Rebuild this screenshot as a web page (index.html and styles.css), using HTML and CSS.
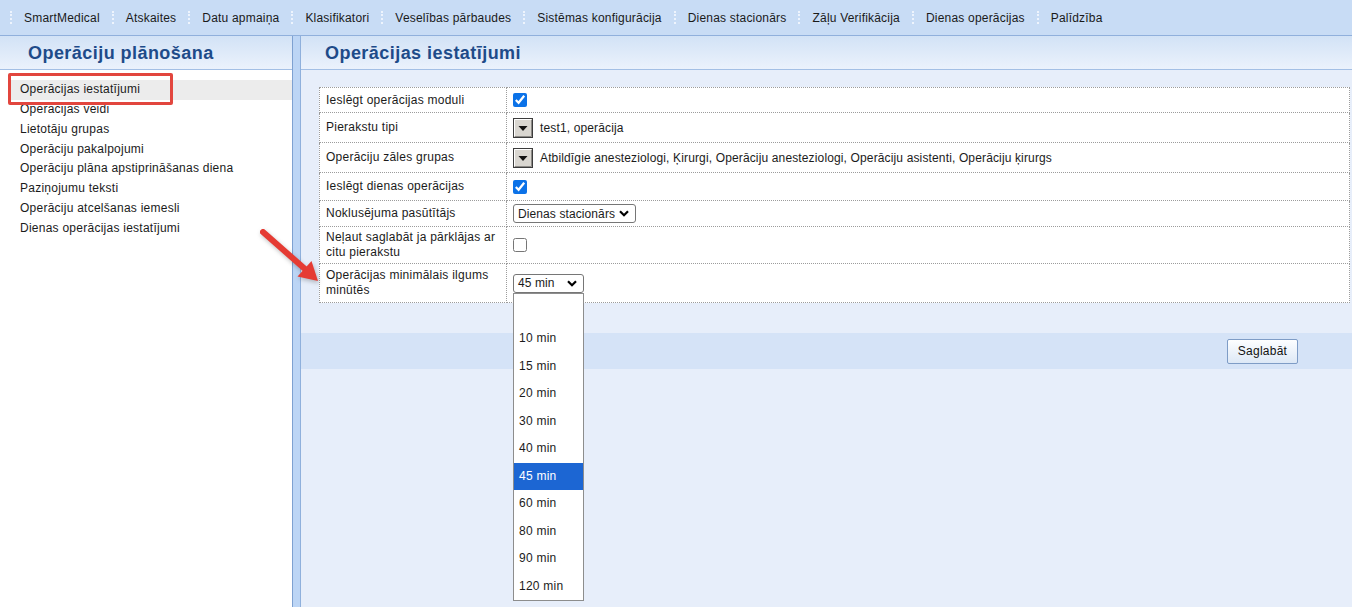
FILE: index.html
```html
<!DOCTYPE html>
<html lang="lv">
<head>
  <meta charset="UTF-8" />
  <title>Operāciju plānošana - SmartMedical</title>
  <link rel="stylesheet" href="styles.css">
</head>
<body>
  <nav class="menubar">
    <span class="sep"></span><a href="#">SmartMedical</a>
    <span class="sep"></span><a href="#">Atskaites</a>
    <span class="sep"></span><a href="#">Datu apmaiņa</a>
    <span class="sep"></span><a href="#">Klasifikatori</a>
    <span class="sep"></span><a href="#">Veselības pārbaudes</a>
    <span class="sep"></span><a href="#">Sistēmas konfigurācija</a>
    <span class="sep"></span><a href="#">Dienas stacionārs</a>
    <span class="sep"></span><a href="#">Zāļu Verifikācija</a>
    <span class="sep"></span><a href="#">Dienas operācijas</a>
    <span class="sep"></span><a href="#">Palīdzība</a>
  </nav>

  <div class="layout">
    <aside class="sidebar">
      <h1 class="panel-title">Operāciju plānošana</h1>
      <ul class="nav">
        <li class="active">Operācijas iestatījumi</li>
        <li>Operacijas veidi</li>
        <li>Lietotāju grupas</li>
        <li>Operāciju pakalpojumi</li>
        <li>Operāciju plāna apstiprināšanas diena</li>
        <li>Paziņojumu teksti</li>
        <li>Operāciju atcelšanas iemesli</li>
        <li>Dienas operācijas iestatījumi</li>
      </ul>
      <div class="mark-box"></div>
    </aside>

    <div class="splitter"></div>

    <main class="content">
      <h2 class="panel-title">Operācijas iestatījumi</h2>
      <div class="form-wrap">
        <table class="settings">
          <tr class="r25">
            <td class="label">Ieslēgt operācijas moduli</td>
            <td><input type="checkbox" checked></td>
          </tr>
          <tr class="r30">
            <td class="label">Pierakstu tipi</td>
            <td>
              <div class="multi">
                <svg class="pick" width="20" height="20" viewBox="0 0 20 20">
                  <rect x="0.5" y="0.5" width="19" height="19" fill="#d9d6d0" stroke="#3c3c3c"/>
                  <path d="M1.5 18V1.5H18" fill="none" stroke="#ffffff"/>
                  <path d="M2 18.5H18.5V2" fill="none" stroke="#8c8a86"/>
                  <path d="M5.5 8h9l-4.5 5z" fill="#111"/>
                </svg>
                <span>test1, operācija</span>
              </div>
            </td>
          </tr>
          <tr class="r30">
            <td class="label">Operāciju zāles grupas</td>
            <td>
              <div class="multi">
                <svg class="pick" width="20" height="20" viewBox="0 0 20 20">
                  <rect x="0.5" y="0.5" width="19" height="19" fill="#d9d6d0" stroke="#3c3c3c"/>
                  <path d="M1.5 18V1.5H18" fill="none" stroke="#ffffff"/>
                  <path d="M2 18.5H18.5V2" fill="none" stroke="#8c8a86"/>
                  <path d="M5.5 8h9l-4.5 5z" fill="#111"/>
                </svg>
                <span>Atbildīgie anesteziologi, Ķirurgi, Operāciju anesteziologi, Operāciju asistenti, Operāciju ķirurgs</span>
              </div>
            </td>
          </tr>
          <tr class="r28">
            <td class="label">Ieslēgt dienas operācijas</td>
            <td><input type="checkbox" checked></td>
          </tr>
          <tr class="r26">
            <td class="label">Noklusējuma pasūtītājs</td>
            <td>
              <div class="select select-wide">
                <span>Dienas stacionārs</span>
                <svg width="10" height="7" viewBox="0 0 10 7"><path d="M1 1.2l4 4 4-4" fill="none" stroke="#000" stroke-width="2.2"/></svg>
              </div>
            </td>
          </tr>
          <tr class="r37">
            <td class="label">Neļaut saglabāt ja pārklājas ar<br>citu pierakstu</td>
            <td><input type="checkbox"></td>
          </tr>
          <tr class="r39">
            <td class="label">Operācijas minimālais ilgums<br>minūtēs</td>
            <td>
              <div class="select-wrap">
                <div class="select select-short">
                  <span>45 min</span>
                  <svg width="10" height="7" viewBox="0 0 10 7"><path d="M1 1.2l4 4 4-4" fill="none" stroke="#000" stroke-width="2.2"/></svg>
                </div>
                <ul class="dropdown">
                  <li></li>
                  <li>10 min</li>
                  <li>15 min</li>
                  <li>20 min</li>
                  <li>30 min</li>
                  <li>40 min</li>
                  <li class="selected">45 min</li>
                  <li>60 min</li>
                  <li>80 min</li>
                  <li>90 min</li>
                  <li>120 min</li>
                </ul>
              </div>
            </td>
          </tr>
        </table>
      </div>
      <div class="actions">
        <button type="button">Saglabāt</button>
      </div>
    </main>
  </div>

  <!-- annotation arrow pointing at the duration row -->
  <svg class="pointer" width="72" height="66" viewBox="0 0 72 66">
    <path d="M8 7L50 44" stroke="#e53b33" stroke-width="6" stroke-linecap="round"/>
    <path d="M63 56L42.5 51.5L56.5 36z" fill="#e53b33"/>
  </svg>
</body>
</html>
```

FILE: styles.css
```css
body {
  margin: 0;
  font-family: "Liberation Sans", Arial, sans-serif;
  font-size: 12px;
  letter-spacing: 0.25px;
  color: #1b1b1b;
  background: #fff;
  overflow: hidden;
}
/* top menu */
.menubar {
  display: flex;
  align-items: center;
  height: 35px;
  padding-left: 10px;
  background: #c8dcf5;
  border-bottom: 1px solid #90b0dc;
  letter-spacing: 0.2px;
}
.menubar .sep {
  width: 0;
  height: 13px;
  border-left: 2px dotted #eef4fd;
}
.menubar a {
  padding: 0 12px;
  color: #1a1a1a;
  text-decoration: none;
}
/* two panels */
.layout {
  display: flex;
  height: 571px;
}
.sidebar {
  width: 292px;
  position: relative;
  background: #fff;
}
.splitter {
  width: 7px;
  background: #bcd5f5;
  border-left: 1px solid #7ea1d1;
  border-right: 1px solid #8fb0dc;
}
.content {
  flex: 1;
  display: flex;
  flex-direction: column;
  background: #e7eefa;
}
.panel-title {
  margin: 0;
  height: 33px;
  line-height: 34px;
  font-size: 18px;
  letter-spacing: 0.45px;
  font-weight: bold;
  color: #1e4b89;
  background: linear-gradient(#d2e2f6, #ebf2fc);
  border-bottom: 1px solid #a3bfe5;
}
.sidebar .panel-title { padding-left: 28px; }
.content .panel-title { padding-left: 24px; }

.nav {
  list-style: none;
  margin: 10px 0 0 8px;
  padding: 0;
}
.nav li {
  line-height: 19.85px;
  padding-left: 12px;
  color: #1b1b1b;
}
.nav li.active { background: #ececec; }
.mark-box {
  position: absolute;
  left: 8px; top: 37px;
  width: 165px; height: 32px;
  box-sizing: border-box;
  border: 3px solid #e2463e;
  border-radius: 2px;
}
/* settings form */
.form-wrap {
  padding: 17px 2px 0 18px;
}
.settings {
  width: 100%;
  border-collapse: collapse;
  background: #fff;
}
.settings td {
  border: 1px dotted #9c9c9c;
  padding: 0 6px;
  vertical-align: middle;
}
.settings td.label {
  width: 174px;
  line-height: 15px;
}
.r25 { height: 25px; }
.r26 { height: 26px; }
.r28 { height: 28px; }
.r30 { height: 30px; }
.r37 { height: 37px; }
.r39 { height: 39px; }
.settings input[type="checkbox"] {
  margin: 0;
  width: 14px;
  height: 14px;
  vertical-align: middle;
  accent-color: #0b72e8;
}
.multi {
  display: flex;
  align-items: center;
  gap: 7px;
  letter-spacing: 0.14px;
}
.pick { display: block; }
.select-wrap {
  position: relative;
  display: inline-block;
  vertical-align: middle;
}
.select {
  display: inline-flex;
  align-items: center;
  justify-content: space-between;
  box-sizing: border-box;
  height: 19px;
  padding: 0 6px 0 4px;
  border: 1px solid #767676;
  border-radius: 3px;
  background: #fff;
  vertical-align: middle;
  letter-spacing: 0.1px;
}
.select-wide { width: 123px; }
.select-short { width: 71px; }
.dropdown {
  position: absolute;
  left: 0; top: 100%;
  width: 71px;
  box-sizing: border-box;
  margin: 0;
  padding: 4px 0 0;
  list-style: none;
  background: #fff;
  border: 1px solid #8d8d8d;
}
.dropdown li {
  height: 27.5px;
  line-height: 27.5px;
  padding-left: 5px;
}
.dropdown li.selected {
  background: #1c66d3;
  color: #fff;
}
/* save bar */
.actions {
  margin-top: 30px;
  height: 36px;
  display: flex;
  align-items: center;
  justify-content: flex-end;
  padding-right: 54px;
  background: #d5e3f7;
}
.actions button {
  width: 71px;
  height: 25px;
  font-family: inherit;
  font-size: 12px;
  letter-spacing: 0.25px;
  color: #111;
  border: 1px solid #7e9cc6;
  border-radius: 2px;
  background: linear-gradient(#fdfeff, #dde8f6);
}
.pointer {
  position: absolute;
  left: 255px; top: 225px;
  filter: drop-shadow(1px 2px 2px rgba(0,0,0,0.25));
}
```
